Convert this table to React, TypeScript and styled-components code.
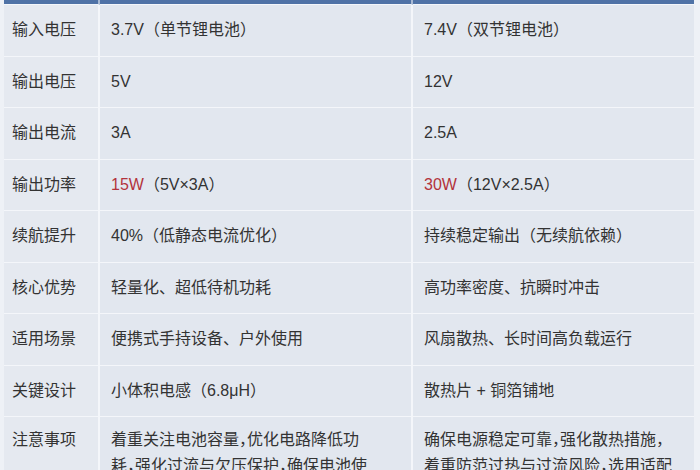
import React from "react";
import styled, { createGlobalStyle } from "styled-components";

const Global = createGlobalStyle`
  html, body { margin: 0; padding: 0; background: #eef1f6; }
  body { font-family: "Liberation Sans", "Noto Sans CJK SC", sans-serif; }
`;

const Frame = styled.div`
  width: 700px;
  height: 470px;
  overflow: hidden;
  background: linear-gradient(90deg, #eef1f6 0 4px, #e3e8f0 4px 694px, #eef1f6 694px);
  padding: 0 6px 0 4px;
  box-sizing: border-box;
`;

const Table = styled.div`
  display: grid;
  grid-template-columns: 96px 313px 281px;
  grid-auto-rows: auto;
`;

const HeadCell = styled.div<{ $last?: boolean }>`
  height: 4px;
  background: #4f72a6;
  border-right: ${(p) => (p.$last ? "none" : "2px solid #a9bad4")};
  border-bottom: 1.5px solid #f3f6fa;
`;

const Cell = styled.div<{ $kind: "label" | "mid" | "right"; $wrap?: boolean }>`
  min-height: 51.5px;
  box-sizing: border-box;
  display: flex;
  align-items: ${(p) => (p.$wrap ? "flex-start" : "center")};
  padding-top: ${(p) => (p.$wrap ? "10px" : "0")};
  padding-left: ${(p) => (p.$kind === "label" ? "8px" : "11px")};
  padding-right: ${(p) => (p.$kind === "label" ? "0" : p.$kind === "mid" ? "42px" : "20px")};
  font-size: 16px;
  line-height: 26px;
  color: #333333;
  font-feature-settings: ${(p) => (p.$wrap && p.$kind !== "label" ? '"halt"' : "normal")};
  background: ${(p) => (p.$kind === "label" ? "#e5e9f0" : "#e2e7ef")};
  border-right: ${(p) => (p.$kind === "right" ? "none" : "2px solid #f4f6fa")};
  border-bottom: 1.5px solid #f4f6fa;
`;

const Red = styled.span`
  color: #b3333c;
`;

type Row = { label: string; a: React.ReactNode; b: React.ReactNode; wrap?: boolean };

const rows: Row[] = [
  { label: "输入电压", a: "3.7V（单节锂电池）", b: "7.4V（双节锂电池）" },
  { label: "输出电压", a: "5V", b: "12V" },
  { label: "输出电流", a: "3A", b: "2.5A" },
  {
    label: "输出功率",
    a: (
      <>
        <Red>15W</Red>（5V×3A）
      </>
    ),
    b: (
      <>
        <Red>30W</Red>（12V×2.5A）
      </>
    ),
  },
  { label: "续航提升", a: "40%（低静态电流优化）", b: "持续稳定输出（无续航依赖）" },
  { label: "核心优势", a: "轻量化、超低待机功耗", b: "高功率密度、抗瞬时冲击" },
  { label: "适用场景", a: "便携式手持设备、户外使用", b: "风扇散热、长时间高负载运行" },
  { label: "关键设计", a: "小体积电感（6.8μH）", b: "散热片 + 铜箔铺地" },
  {
    label: "注意事项",
    a: "着重关注电池容量，优化电路降低功耗，强化过流与欠压保护，确保电池使用安全",
    b: "确保电源稳定可靠，强化散热措施，着重防范过热与过流风险，选用适配元件",
    wrap: true,
  },
];

export default function App() {
  return (
    <>
      <Global />
      <Frame>
        <Table>
          <HeadCell />
          <HeadCell />
          <HeadCell $last />
          {rows.map((r) => (
            <React.Fragment key={r.label}>
              <Cell $kind="label" $wrap={r.wrap}>{r.label}</Cell>
              <Cell $kind="mid" $wrap={r.wrap}>{r.a}</Cell>
              <Cell $kind="right" $wrap={r.wrap}>{r.b}</Cell>
            </React.Fragment>
          ))}
        </Table>
      </Frame>
    </>
  );
}
